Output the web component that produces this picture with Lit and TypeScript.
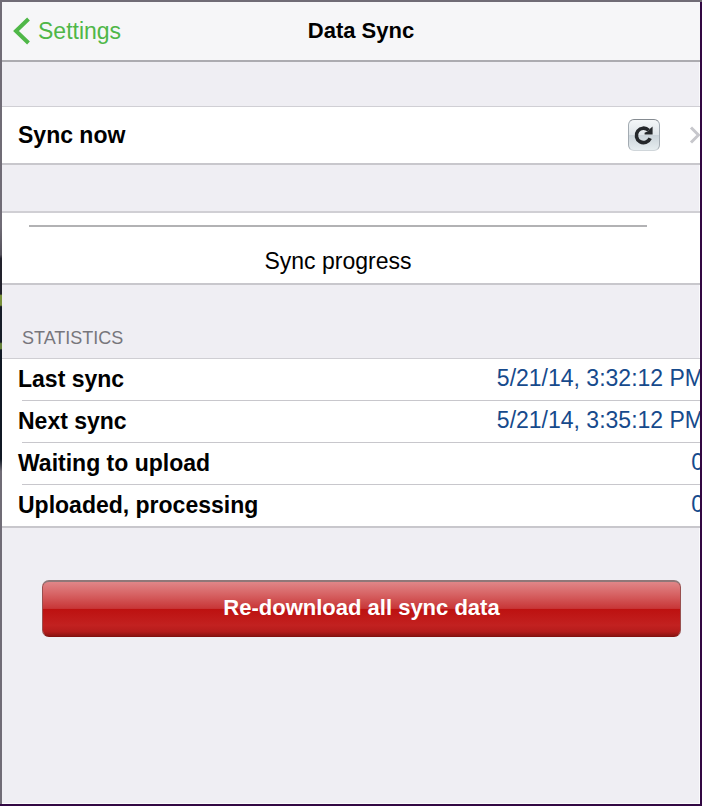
import { LitElement, html, css } from "lit";
import { customElement, property, state } from "lit/decorators.js";

interface Stat {
  label: string;
  value: string;
}

@customElement("nav-header")
class NavHeader extends LitElement {
  @property() heading = "";
  @property() back = "";

  static styles = css`
    :host {
      display: block;
    }
    .bar {
      display: grid;
      grid-template-columns: 1fr auto 1fr;
      align-items: center;
      height: 58px;
      padding: 0 10px;
      background: #f6f6f8;
      border-bottom: 2px solid #acabb0;
    }
    .back {
      display: flex;
      align-items: center;
      gap: 8px;
      color: #4fb748;
      text-decoration: none;
      font-size: 23px;
    }
    .back svg {
      display: block;
    }
    .title {
      margin: 0;
      padding-left: 20px;
      font-size: 22px;
      font-weight: bold;
      line-height: 28px;
    }
  `;

  render() {
    return html`
      <header class="bar">
        <a class="back" href="#settings">
          <svg width="18" height="28" viewBox="0 0 18 28" aria-hidden="true">
            <path d="M16.5 2 L4 14 L16.5 26" fill="none" stroke="#4fb748" stroke-width="4" />
          </svg>
          ${this.back}
        </a>
        <h1 class="title">${this.heading}</h1>
      </header>
    `;
  }
}

@customElement("stat-list")
class StatList extends LitElement {
  @property({ attribute: false }) stats: Stat[] = [];

  static styles = css`
    :host {
      display: block;
    }
    .list {
      margin: 0;
      background: #fff;
      border-top: 1px solid #cfced3;
      border-bottom: 1px solid #c8c7cc;
    }
    .row {
      display: flex;
      justify-content: space-between;
      align-items: center;
      height: 42px;
      padding-left: 16px;
      font-size: 23px;
      line-height: 28px;
      white-space: nowrap;
      background: linear-gradient(#c8c7cc, #c8c7cc) 20px 100% / 100% 1px no-repeat;
    }
    .row:last-child {
      background-position: 0 100%;
    }
    .label {
      padding-bottom: 2px;
      font-weight: bold;
    }
    .value {
      margin: 0 -4px 0 0;
      padding-bottom: 4px;
      color: #164a8c;
    }
  `;

  render() {
    return html`
      <dl class="list">
        ${this.stats.map(
          (s) => html`
            <div class="row">
              <dt class="label">${s.label}</dt>
              <dd class="value">${s.value}</dd>
            </div>
          `
        )}
      </dl>
    `;
  }
}

@customElement("app-root")
class AppRoot extends LitElement {
  @state() private stats: Stat[] = [
    { label: "Last sync", value: "5/21/14, 3:32:12 PM" },
    { label: "Next sync", value: "5/21/14, 3:35:12 PM" },
    { label: "Waiting to upload", value: "0" },
    { label: "Uploaded, processing", value: "0" },
  ];

  static styles = css`
    :host {
      display: grid;
      grid-template-columns: 2px minmax(0, 1fr) 2px;
      box-sizing: border-box;
      min-height: 100vh;
      border-top: 2px solid #706c76;
      border-bottom: 2px solid #320843;
      font-family: "Liberation Sans", Arial, sans-serif;
      color: #000;
    }
    .edge-left {
      background: linear-gradient(
        #706c76 28%,
        #55525c 31.5%,
        #22222c 32%,
        #22222c 36.4%,
        #78903a 36.6%,
        #78903a 37.8%,
        #161c28 38%,
        #161c28 42.4%,
        #64803a 42.6%,
        #64803a 43.2%,
        #101824 43.4%,
        #101824 57%,
        #706c76 58.5%
      );
    }
    .edge-right {
      background: #320843;
    }
    .page {
      overflow: hidden;
      background: #efeef3;
      box-shadow: inset -1px -1px #fafafc;
    }
    .panel {
      background: #fff;
      border-top: 2px solid #d0cfd4;
      border-bottom: 2px solid #c8c7cc;
    }
    .sync-row {
      display: flex;
      align-items: center;
      height: 56px;
      margin-top: 44px;
      padding-left: 16px;
      border-top-width: 1px;
    }
    .sync-label {
      flex: 1;
      font-size: 23px;
      font-weight: bold;
      line-height: 28px;
    }
    .refresh {
      width: 32px;
      height: 32px;
      margin-right: 28px;
      padding: 0;
      display: grid;
      place-items: center;
      border: 1px solid #a3abb2;
      border-top-color: #858b91;
      border-bottom-color: #d0d6da;
      border-radius: 6px;
      background: linear-gradient(#f4f7f8 0%, #dfe5e9 50%, #cbd4da 51%, #e6edf0 100%);
    }
    .refresh svg,
    .more svg {
      display: block;
    }
    .more {
      margin-right: -2px;
    }
    .progress {
      display: flex;
      flex-direction: column;
      height: 70px;
      margin-top: 46px;
      padding: 0 53px 0 27px;
    }
    .track {
      appearance: none;
      display: block;
      width: 100%;
      height: 2px;
      margin-top: 12px;
      border: 0;
      background: #b2b2b4;
    }
    .track::-webkit-progress-bar {
      background: #b2b2b4;
    }
    .track::-webkit-progress-value {
      background: #4fb748;
    }
    .progress-label {
      margin-top: 20px;
      text-align: center;
      font-size: 23px;
      line-height: 28px;
    }
    .section-title {
      margin: 0;
      padding: 42px 20px 9px;
      font-size: 18px;
      font-weight: normal;
      line-height: 22px;
      color: #77767c;
    }
    .actions {
      padding: 52px 19px 0 40px;
    }
    .danger {
      display: block;
      width: 100%;
      height: 57px;
      padding: 0 0 2px;
      border: 1px solid #99504f;
      border-top: 2px solid #8f7778;
      border-bottom-color: #84110f;
      border-radius: 7px;
      background: linear-gradient(
        #e08688 0%,
        #d76465 22%,
        #c83637 49%,
        #bd1110 50%,
        #c22120 80%,
        #b51c1b 92%,
        #8c1412 100%
      );
      color: #fff;
      font-family: inherit;
      font-size: 22px;
      font-weight: bold;
      line-height: 28px;
    }
  `;

  render() {
    return html`
      <div class="edge-left"></div>
      <main class="page">
        <nav-header heading="Data Sync" back="Settings"></nav-header>

        <section class="panel sync-row">
          <span class="sync-label" id="sync-label">Sync now</span>
          <button class="refresh" aria-labelledby="sync-label">
            <svg width="22" height="22" viewBox="0 0 22 22" aria-hidden="true">
              <path
                d="M17.2 14.2 A7.2 7.2 0 1 1 15.6 6.2"
                fill="none"
                stroke="#25282b"
                stroke-width="3.6"
              />
              <path d="M19.6 2.4 V10.4 H11.6 L11.6 8.8 L14.4 7.4 L17 4.8 Z" fill="#25282b" />
            </svg>
          </button>
          <a class="more" href="#sync" aria-label="Sync details">
            <svg width="14" height="18" viewBox="0 0 14 18" aria-hidden="true">
              <path d="M3 1.5 L10.5 9 L3 16.5" fill="none" stroke="#c7c7cc" stroke-width="3" />
            </svg>
          </a>
        </section>

        <section class="panel progress">
          <progress class="track" id="progress" max="100" value="0"></progress>
          <label class="progress-label" for="progress">Sync progress</label>
        </section>

        <h2 class="section-title">STATISTICS</h2>
        <stat-list .stats=${this.stats}></stat-list>

        <div class="actions">
          <button class="danger">Re-download all sync data</button>
        </div>
      </main>
      <div class="edge-right"></div>
    `;
  }
}
